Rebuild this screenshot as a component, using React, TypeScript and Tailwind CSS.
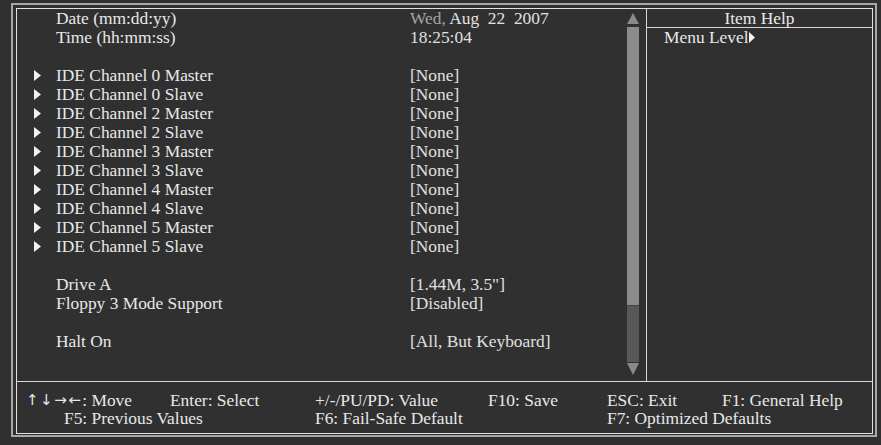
import React from "react";

const Arrow = () => (
  <svg width="7" height="11" viewBox="0 0 7 11" className="block">
    <polygon points="0,0 7,5.5 0,11" fill="#f2f2f2" />
  </svg>
);

type Row = { label?: string; value?: React.ReactNode; sub?: boolean };

const rows: Row[] = [
  { label: "Date (mm:dd:yy)", value: (<span><span className="text-[#a4a4a4]">Wed,</span>{" Aug  22  2007"}</span>) },
  { label: "Time (hh:mm:ss)", value: "18:25:04" },
  {},
  { label: "IDE Channel 0 Master", value: "[None]", sub: true },
  { label: "IDE Channel 0 Slave", value: "[None]", sub: true },
  { label: "IDE Channel 2 Master", value: "[None]", sub: true },
  { label: "IDE Channel 2 Slave", value: "[None]", sub: true },
  { label: "IDE Channel 3 Master", value: "[None]", sub: true },
  { label: "IDE Channel 3 Slave", value: "[None]", sub: true },
  { label: "IDE Channel 4 Master", value: "[None]", sub: true },
  { label: "IDE Channel 4 Slave", value: "[None]", sub: true },
  { label: "IDE Channel 5 Master", value: "[None]", sub: true },
  { label: "IDE Channel 5 Slave", value: "[None]", sub: true },
  {},
  { label: "Drive A", value: '[1.44M, 3.5"]' },
  { label: "Floppy 3 Mode Support", value: "[Disabled]" },
  {},
  { label: "Halt On", value: "[All, But Keyboard]" },
];

export default function App() {
  return (
    <div className="w-[881px] h-[445px] bg-[#303030] pl-[11px] pt-[3px] font-['Liberation_Serif',serif] text-[17.4px] text-[#e8e8e8] whitespace-pre overflow-hidden">
      <div className="w-[866px] h-[434px] border-2 border-[#a8a8a8] pl-[3px] pt-[3px] pr-[2px] pb-[1px]">
        <div className="h-full border border-[#e2e2e2] flex flex-col">
          {/* top section */}
          <div className="h-[373px] flex border-b border-[#d8d8d8]">
            {/* main */}
            <div className="w-[629px] flex">
              <div className="w-[610px] pl-[17px]">
                {rows.map((r, i) => (
                  <div key={i} className="h-[19px] leading-[19px] grid grid-cols-[22px_354px_1fr] items-center">
                    <div className="flex items-center h-[19px]">{r.sub ? <Arrow /> : null}</div>
                    <div>{r.label ?? ""}</div>
                    <div className="text-[#e0e0e0]">{r.value ?? ""}</div>
                  </div>
                ))}
              </div>
              <div className="w-[12px] pt-[4px] flex flex-col">
                <svg width="12" height="11" viewBox="0 0 12 11" className="block">
                  <polygon points="6,0 12,11 0,11" fill="#8a8a8a" />
                </svg>
                <div className="mt-[3px] h-[278px] bg-[#8c8c8c]" />
                <div className="h-[57px] bg-[#585858] border-t border-[#454545]" />
                <svg width="12" height="12" viewBox="0 0 12 12" className="block mt-[1px]">
                  <polygon points="0,0 12,0 6,12" fill="#8a8a8a" />
                </svg>
              </div>
            </div>
            {/* help */}
            <div className="w-[226px] border-l border-[#d8d8d8] flex flex-col">
              <div className="h-[19px] leading-[18px] border-b border-[#d8d8d8] text-center">Item Help</div>
              <div className="pl-[17px] h-[19px] leading-[19px] flex items-center">
                <span>Menu Level</span>
                <svg width="6" height="11" viewBox="0 0 6 11" className="block">
                  <polygon points="0,0 6,5.5 0,11" fill="#f2f2f2" />
                </svg>
              </div>
            </div>
          </div>
          {/* bottom section */}
          <div className="flex-1 pl-[9px] pt-[9px] grid grid-cols-[144px_145px_173px_119px_115px_1fr] auto-rows-[18px] leading-[18px]">
            <div className="flex items-center">
              <span className="font-['DejaVu_Sans',sans-serif] text-[15px] tracking-[1.5px] leading-[18px]">↑↓→←</span>
              <span>: Move</span>
            </div>
            <div>Enter: Select</div>
            <div>+/-/PU/PD: Value</div>
            <div>F10: Save</div>
            <div>ESC: Exit</div>
            <div>F1: General Help</div>
            <div className="col-span-2 pl-[38px]">F5: Previous Values</div>
            <div className="col-span-2">F6: Fail-Safe Default</div>
            <div className="col-span-2">F7: Optimized Defaults</div>
          </div>
        </div>
      </div>
    </div>
  );
}
